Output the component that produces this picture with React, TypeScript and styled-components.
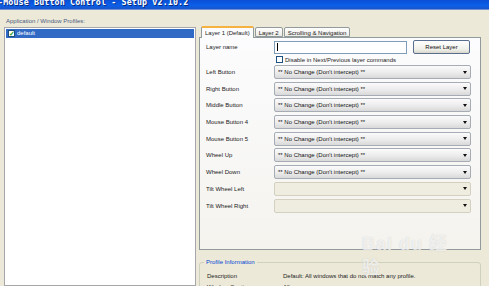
import React from "react";
import styled, { createGlobalStyle } from "styled-components";

const GlobalStyle = createGlobalStyle`
  html, body {
    margin: 0;
    padding: 0;
    background: #ece9d8;
  }
  body {
    font-family: "Liberation Sans", Arial, sans-serif;
  }
`;

const buttonRows = [
  { label: "Left Button", disabled: false },
  { label: "Right Button", disabled: false },
  { label: "Middle Button", disabled: false },
  { label: "Mouse Button 4", disabled: false },
  { label: "Mouse Button 5", disabled: false },
  { label: "Wheel Up", disabled: false },
  { label: "Wheel Down", disabled: false },
  { label: "Tilt Wheel Left", disabled: true },
  { label: "Tilt Wheel Right", disabled: true },
];

const App = () => {
  return (
    <Window>
      <GlobalStyle />
      <TitleBar>
        <TitleText>-Mouse Button Control - Setup v2.10.2</TitleText>
      </TitleBar>
      <Body>
        <LeftPane>
          <PaneLabel>Application / Window Profiles:</PaneLabel>
          <ProfileList>
            <ProfileItem>
              <CheckBox checked />
              <span>default</span>
            </ProfileItem>
          </ProfileList>
        </LeftPane>
        <RightPane>
          <TabStrip>
            <Tab active>Layer 1 (Default)</Tab>
            <Tab>Layer 2</Tab>
            <Tab>Scrolling &amp; Navigation</Tab>
          </TabStrip>
          <TabPanel>
            <FormRow>
              <FieldLabel>Layer name</FieldLabel>
              <TextInput>
                <Caret />
              </TextInput>
              <ResetButton>Reset Layer</ResetButton>
            </FormRow>
            <CheckRow>
              <CheckBox />
              <span>Disable in Next/Previous layer commands</span>
            </CheckRow>
            <SelectList>
              {buttonRows.map((row) => (
                <FormRow key={row.label}>
                  <FieldLabel>{row.label}</FieldLabel>
                  <Select disabled={row.disabled}>
                    <span>{row.disabled ? "" : "** No Change (Don't intercept) **"}</span>
                    <Arrow />
                  </Select>
                </FormRow>
              ))}
            </SelectList>
          </TabPanel>
          <GroupBox>
            <GroupLegend>Profile Information</GroupLegend>
            <InfoRow>
              <InfoKey>Description</InfoKey>
              <span>Default: All windows that do not match any profile.</span>
            </InfoRow>
            <InfoRow>
              <InfoKey>Window Caption</InfoKey>
              <span>All</span>
            </InfoRow>
          </GroupBox>
        </RightPane>
        <Watermark>
          <WatermarkLogo>Bai du 经验</WatermarkLogo>
          <WatermarkUrl>jingyan.baidu.com</WatermarkUrl>
        </Watermark>
      </Body>
    </Window>
  );
};

export default App;

const Window = styled.div`
  width: 489px;
  height: 286px;
  overflow: hidden;
  background: #ece9d8;
  display: flex;
  flex-direction: column;
  font-size: 6px;
  color: #222;
`;

const TitleBar = styled.div`
  height: 9px;
  flex: none;
  overflow: hidden;
  background: linear-gradient(180deg, #0a4fd6 0%, #0b5fe8 60%, #1a55c8 100%);
  border-bottom: 1px solid #6f8fd8;
`;

const TitleText = styled.div`
  margin-top: -3px;
  margin-left: -2px;
  font-family: "DejaVu Sans Mono", monospace;
  font-weight: bold;
  font-size: 8.3px;
  line-height: 11px;
  color: #fff;
  letter-spacing: 0.15px;
  text-shadow: 1px 1px 0 #0a2a7a;
  white-space: nowrap;
`;

const Body = styled.div`
  position: relative;
  flex: 1;
  display: flex;
  gap: 3px;
  padding: 6px 8px 0 4px;
  min-height: 0;
`;

const LeftPane = styled.div`
  width: 192px;
  display: flex;
  flex-direction: column;
`;

const PaneLabel = styled.div`
  height: 10px;
  line-height: 10px;
  padding-left: 2px;
  color: #4a5a80;
`;

const ProfileList = styled.div`
  margin-top: 1px;
  flex: 1;
  background: #fff;
  border: 1px solid #a7a6aa;
  padding: 1px;
`;

const ProfileItem = styled.div`
  height: 9px;
  display: flex;
  align-items: center;
  gap: 2px;
  padding-left: 2px;
  background: #316ac5;
  color: #fff;
  line-height: 9px;
`;

const CheckBox = styled.span<{ checked?: boolean }>`
  width: 7px;
  height: 7px;
  flex: none;
  box-sizing: border-box;
  border: 1px solid #1c5180;
  background: #fff;
  position: relative;
  &::after {
    content: "${(p) => (p.checked ? "✓" : "")}";
    position: absolute;
    left: 0px;
    top: -2px;
    font-size: 7px;
    font-weight: bold;
    color: #21a121;
  }
`;

const RightPane = styled.div`
  width: 282px;
  padding-top: 10px;
  display: flex;
  flex-direction: column;
`;

const TabStrip = styled.div`
  display: flex;
  align-items: flex-end;
  height: 12px;
  padding-left: 2px;
  position: relative;
  z-index: 1;
`;

const Tab = styled.div<{ active?: boolean }>`
  height: ${(p) => (p.active ? 12 : 10)}px;
  line-height: ${(p) => (p.active ? 11 : 10)}px;
  padding: 0 3px;
  box-sizing: border-box;
  border: 1px solid #919b9c;
  border-bottom: ${(p) => (p.active ? "none" : "1px solid #919b9c")};
  border-top: ${(p) => (p.active ? "2px solid #f5b240" : "1px solid #919b9c")};
  border-radius: 2px 2px 0 0;
  background: ${(p) => (p.active ? "#fcfcfe" : "linear-gradient(180deg, #fff, #ecebe5)")};
  margin-right: 1px;
  white-space: nowrap;
  margin-bottom: ${(p) => (p.active ? -1 : 0)}px;
`;

const TabPanel = styled.div`
  height: 213px;
  flex: none;
  box-sizing: border-box;
  border: 1px solid #919b9c;
  background: linear-gradient(180deg, #fcfcfe 0%, #f4f3ee 100%);
  padding: 2px 9px 0 6px;
  display: flex;
  flex-direction: column;
`;

const FormRow = styled.div`
  display: flex;
  align-items: center;
  height: 14px;
`;

const FieldLabel = styled.div`
  width: 68px;
  flex: none;
  white-space: nowrap;
`;

const TextInput = styled.div`
  width: 133px;
  height: 13px;
  box-sizing: border-box;
  border: 1px solid #7f9db9;
  background: #fff;
  display: flex;
  align-items: center;
  padding-left: 2px;
`;

const Caret = styled.span`
  width: 1px;
  height: 8px;
  background: #000;
`;

const ResetButton = styled.div`
  margin-left: 6px;
  width: 57px;
  height: 14px;
  box-sizing: border-box;
  border: 1px solid #5a6f8f;
  border-radius: 2px;
  background: linear-gradient(180deg, #fefefe 0%, #f0f0ea 70%, #d8d6ca 100%);
  display: flex;
  align-items: center;
  justify-content: center;
  color: #111;
`;

const CheckRow = styled.div`
  height: 11px;
  display: flex;
  align-items: center;
  gap: 2px;
  padding-left: 70px;
`;

const SelectList = styled.div`
  display: flex;
  flex-direction: column;
  gap: 2.7px;
`;

const Select = styled.div<{ disabled?: boolean }>`
  width: 197px;
  height: 14px;
  box-sizing: border-box;
  border: 1px solid ${(p) => (p.disabled ? "#d4d0c0" : "#a5acb5")};
  border-radius: 2px;
  background: ${(p) =>
    p.disabled
      ? "#efeddf"
      : "linear-gradient(180deg, #fbfbfb 0%, #ececec 55%, #d9d9d9 100%)"};
  display: flex;
  align-items: center;
  justify-content: space-between;
  padding: 0 3px 0 3px;
  color: #111;
`;

const Arrow = styled.span`
  width: 0;
  height: 0;
  border-left: 2px solid transparent;
  border-right: 2px solid transparent;
  border-top: 3px solid #111;
`;

const GroupBox = styled.div`
  margin-top: 12px;
  flex: 1;
  position: relative;
  border: 1px solid #d0d0bf;
  border-radius: 3px;
  padding: 7px 0 0 7px;
`;

const GroupLegend = styled.div`
  position: absolute;
  top: -5px;
  left: 4px;
  padding: 0 2px;
  background: #ece9d8;
  color: #0046d5;
  line-height: 9px;
`;

const InfoRow = styled.div`
  display: flex;
  height: 11.5px;
  align-items: center;
`;

const InfoKey = styled.div`
  width: 76px;
  flex: none;
`;

const Watermark = styled.div`
  position: absolute;
  left: 362px;
  top: 222px;
  width: 100px;
  display: flex;
  flex-direction: column;
  align-items: center;
  color: rgba(255, 255, 255, 0.7);
  pointer-events: none;
`;

const WatermarkLogo = styled.div`
  font-family: "Liberation Sans", "Noto Sans CJK SC", sans-serif;
  font-size: 18px;
  font-weight: bold;
  letter-spacing: 1px;
  line-height: 24px;
  text-shadow: 0 0 1px rgba(150, 150, 150, 0.45);
`;

const WatermarkUrl = styled.div`
  font-size: 9px;
  margin-top: 6px;
  letter-spacing: 0.8px;
  text-shadow: 0 0 1px rgba(150, 150, 150, 0.3);
`;
